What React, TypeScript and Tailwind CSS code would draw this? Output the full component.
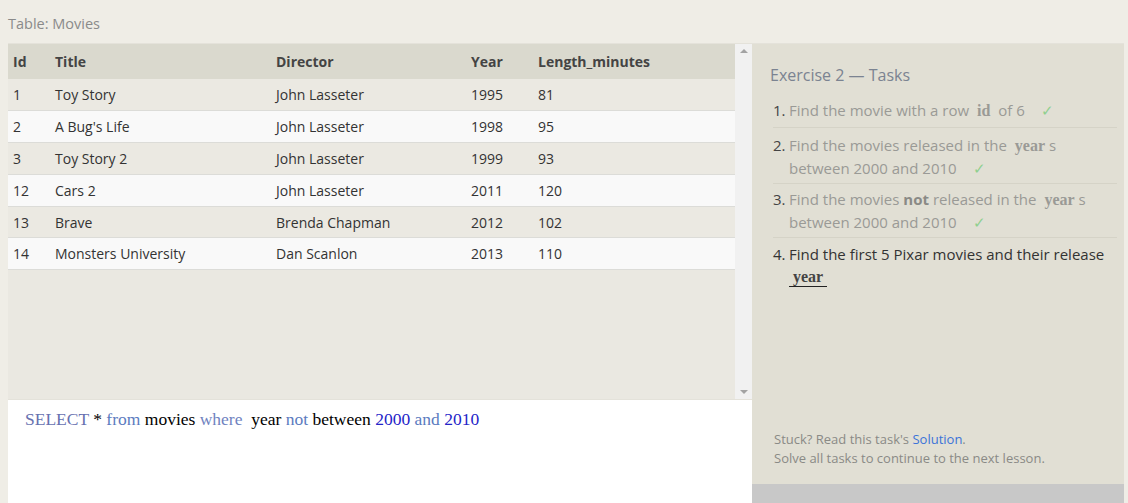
import React from 'react';

const rows = [
  { id: 1, title: 'Toy Story', director: 'John Lasseter', year: 1995, len: 81 },
  { id: 2, title: "A Bug's Life", director: 'John Lasseter', year: 1998, len: 95 },
  { id: 3, title: 'Toy Story 2', director: 'John Lasseter', year: 1999, len: 93 },
  { id: 12, title: 'Cars 2', director: 'John Lasseter', year: 2011, len: 120 },
  { id: 13, title: 'Brave', director: 'Brenda Chapman', year: 2012, len: 102 },
  { id: 14, title: 'Monsters University', director: 'Dan Scanlon', year: 2013, len: 110 },
];

function Check() {
  return <span className="ml-3 text-[#8fd08f]">✓</span>;
}

function Code({ children }: { children: React.ReactNode }) {
  return <span className="mx-1 font-['Liberation_Serif',serif] font-bold text-[16px]">{children}</span>;
}

export default function App() {
  return (
    <div className="w-[1128px] h-[503px] overflow-hidden bg-[#efede6] font-['Open_Sans',sans-serif]">
      {/* Header */}
      <div className="h-[43px] pl-2 pt-[13px] text-[14.5px] text-[#8a8a8a]">Table: Movies</div>

      <div className="flex h-[460px] ml-2 mr-1 border-t border-[#e4e2da]">
        {/* Left: table + editor */}
        <div className="w-[744px] flex flex-col">
          <div className="flex h-[355px] bg-[#eae8e1]">
            <div className="flex-1">
              <table className="w-full text-[14px] text-[#333] border-collapse">
                <thead>
                  <tr className="h-[35px] bg-[#dad9ce] text-left font-bold text-[#444]">
                    <th className="w-[47px] pl-[5px]">Id</th>
                    <th className="w-[221px]">Title</th>
                    <th className="w-[195px]">Director</th>
                    <th className="w-[67px]">Year</th>
                    <th>Length_minutes</th>
                  </tr>
                </thead>
                <tbody>
                  {rows.map((r, i) => (
                    <tr
                      key={r.id}
                      className={`h-[31.8px] border-b border-[#dcdcd8] ${i % 2 === 0 ? 'bg-[#ebe9e2]' : 'bg-[#f9f9f9]'}`}
                    >
                      <td className="pl-[5px]">{r.id}</td>
                      <td>{r.title}</td>
                      <td>{r.director}</td>
                      <td>{r.year}</td>
                      <td>{r.len}</td>
                    </tr>
                  ))}
                </tbody>
              </table>
            </div>
            {/* Scrollbar */}
            <div className="w-[17px] bg-[#f1f1f1] flex flex-col justify-between items-center py-[5px]">
              <div className="w-0 h-0 border-l-[4px] border-r-[4px] border-b-[4px] border-l-transparent border-r-transparent border-b-[#a3a3a3]" />
              <div className="w-0 h-0 border-l-[4px] border-r-[4px] border-t-[4px] border-l-transparent border-r-transparent border-t-[#a3a3a3]" />
            </div>
          </div>
          {/* Editor */}
          <div className="flex-1 bg-white border-t border-[#e4e2da] pl-[17px] pt-[6px] font-['Liberation_Serif',serif] text-[17.5px] text-black">
            <span className="text-[#6771b0]">SELECT</span> * <span className="text-[#5b7bc0]">from</span> movies{' '}
            <span className="text-[#6f82c0]">where</span>&nbsp; year <span className="text-[#5b7bc0]">not</span> between{' '}
            <span className="text-[#2323c8]">2000</span> <span className="text-[#5b7bc0]">and</span>{' '}
            <span className="text-[#2323c8]">2010</span>
          </div>
        </div>

        {/* Right: tasks */}
        <div className="flex-1 flex flex-col bg-[#e1dfd4]">
          <div className="flex-1 flex flex-col pl-[18px] pr-[7px]">
            <div className="pt-[19px] text-[16px] text-[#7b8391]">Exercise 2 — Tasks</div>
            <ol className="mt-[12px] pl-[3px] text-[15px] leading-[22px]">
              <li className="flex border-b border-[#d5d3c7] pb-[5px]">
                <span className="w-[16px] text-[#444]">1.</span>
                <span className="text-[#9a9a96]">
                  Find the movie with a row <Code>id</Code> of 6 <Check />
                </span>
              </li>
              <li className="flex border-b border-[#d5d3c7] pt-[6px] pb-[4px]">
                <span className="w-[16px] shrink-0 text-[#444]">2.</span>
                <span className="text-[#9a9a96]">
                  Find the movies released in the <Code>year</Code>s
                  <br />
                  between 2000 and 2010 <Check />
                </span>
              </li>
              <li className="flex border-b border-[#d5d3c7] pt-[4px] pb-[4px]">
                <span className="w-[16px] shrink-0 text-[#444]">3.</span>
                <span className="text-[#9a9a96]">
                  Find the movies <b className="text-[#8a8a86]">not</b> released in the <Code>year</Code>s
                  <br />
                  between 2000 and 2010 <Check />
                </span>
              </li>
              <li className="flex pt-[5px]">
                <span className="w-[16px] shrink-0 text-[#333]">4.</span>
                <span className="text-[#333]">
                  Find the first 5 Pixar movies and their release
                  <br />
                  <span className="inline-block mt-[2px] border-b border-[#222] px-1 font-['Liberation_Serif',serif] font-bold text-[16px] leading-[19px] text-[#444]">
                    year
                  </span>
                </span>
              </li>
            </ol>
            <div className="mt-auto mb-[16px] pl-[4px] text-[13px] leading-[19px] text-[#8a8a86]">
              Stuck? Read this task's <span className="text-[#3b73d8]">Solution</span>.
              <br />
              Solve all tasks to continue to the next lesson.
            </div>
          </div>
          <div className="h-[19px] bg-[#c8c8c8]" />
        </div>
      </div>
    </div>
  );
}
